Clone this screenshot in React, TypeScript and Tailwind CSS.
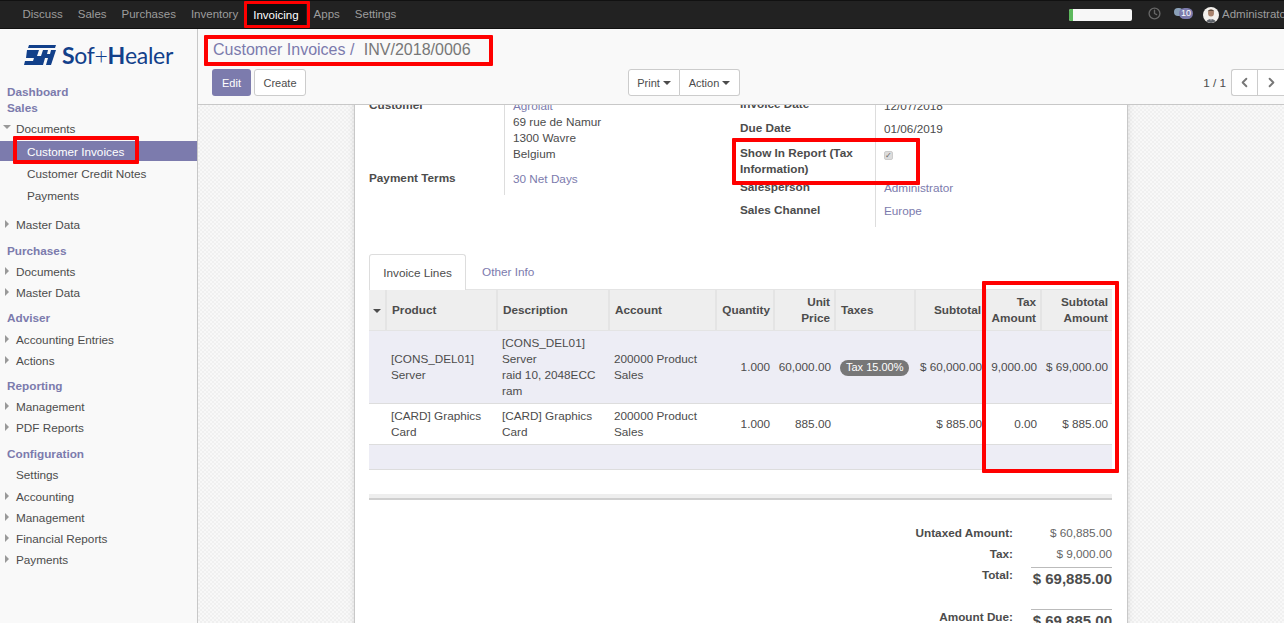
import React from 'react';
import { ChevronLeft, ChevronRight, Clock } from 'lucide-react';

const topMenu = ['Discuss', 'Sales', 'Purchases', 'Inventory', 'Invoicing', 'Apps', 'Settings'];

const Caret = ({ open }: { open?: boolean }) =>
    open ? (
        <span className="absolute left-[3px] top-[7px] w-0 h-0 border-x-[4px] border-x-transparent border-t-[4px] border-t-[#999]"></span>
    ) : (
        <span className="absolute left-[5px] top-[6px] w-0 h-0 border-y-[4px] border-y-transparent border-l-[4px] border-l-[#999]"></span>
    );

const SideItem = ({ label, caret, open }: { label: string; caret?: boolean; open?: boolean }) => (
    <div className="relative h-[21px] pl-[16px] leading-[21px] text-[#4c4c4c]">
        {caret && <Caret open={open} />}
        {label}
    </div>
);

const SideHead = ({ label, className = '' }: { label: string; className?: string }) => (
    <div className={`pl-[7px] font-bold text-[#7c7bad] h-[16px] leading-[18px] ${className}`}>{label}</div>
);

const Th = ({ children, className = '' }: { children?: React.ReactNode; className?: string }) => (
    <th className={`border-l-2 first:border-l-0 border-[#e4e4e4] px-[5px] font-bold leading-[16px] text-[#4c4c4c] ${className}`}>{children}</th>
);

const Logo = () => (
    <div className="flex items-center justify-center h-[52px] mb-[3px] text-[#12408a]">
        <svg width="32" height="20" viewBox="0 0 32 20" className="mr-[6px] shrink-0">
            <path d="M5 0H32L31 3H4Z M3 5H15L13 11H17L19 5H24L23 9H26L27 5H32L27 20H22L24 13H21L19 20H0L1 16H9L10 13H2Z" fill="currentColor" />
        </svg>
        <span className="font-['Lato',sans-serif] text-[23px] tracking-[-0.3px] leading-none whitespace-nowrap">
            <span className="font-bold">S</span>of<span className="font-light">+</span><span className="font-bold">H</span>ealer
        </span>
    </div>
);

export default function App() {
    return (
        <div className="relative w-[1284px] h-[623px] overflow-hidden flex flex-col bg-white font-['Liberation_Sans',Arial,sans-serif] text-[11.75px] text-[#4c4c4c]">
            {/* Top bar */}
            <div className="relative h-[29px] shrink-0 flex items-center bg-[#222] border-y border-[#111] pl-[15px] text-[11.5px]">
                {topMenu.map((m) =>
                    m === 'Invoicing' ? (
                        <span key={m} className="h-[22px] leading-[22px] px-[7.5px] bg-[#0f0f0f] text-white">{m}</span>
                    ) : (
                        <span key={m} className="px-[7.5px] text-[#9d9d9d]">{m}</span>
                    )
                )}
                <div className="ml-auto flex items-center">
                    <div className="w-[63px] h-[12px] rounded-[2px] bg-[#f7f7f7] overflow-hidden mr-[16px]">
                        <div className="w-[4px] h-full bg-[#5cb85c]"></div>
                    </div>
                    <Clock size={13} strokeWidth={2.5} className="text-[#666] mr-[13px] mt-[-2px]" />
                    <div className="relative mr-[10px] w-[19px] h-[11px] mt-[-2px]">
                        <span className="absolute left-0 top-0 w-[9px] h-[8px] rounded-full bg-[#8aa0b8]"></span>
                        <span className="absolute left-[5px] top-0 w-[14px] h-[11px] rounded-full bg-[#7c7bad] text-white text-[9px] leading-[11px] text-center">10</span>
                    </div>
                    <svg width="16" height="16" viewBox="0 0 16 16" className="mr-[3px] shrink-0">
                        <circle cx="8" cy="8" r="8" fill="#f3f0ec" />
                        <ellipse cx="8" cy="6" rx="3" ry="3.6" fill="#a9826c" />
                        <path d="M4.8 5 C5 1.8 11 1.8 11.2 5 L10.4 4 H5.6Z" fill="#5a4538" />
                        <path d="M3.5 14.5 C4 11 12 11 12.5 14.5 L8 16Z" fill="#5b5f66" />
                        <path d="M7 10.5H9L8 14Z" fill="#e8e8e8" />
                    </svg>
                    <span className="text-[#9d9d9d] w-[62px] overflow-hidden whitespace-nowrap">Administrator</span>
                </div>
            </div>

            <div className="flex flex-1 min-h-0">
                {/* Sidebar */}
                <aside className="w-[198px] shrink-0 bg-[#f9f9f9] border-r border-[#c8c8c8]">
                    <Logo />
                    <SideHead label="Dashboard" className="mt-[-1px]" />
                    <SideHead label="Sales" />
                    <div className="mt-[3px]"><SideItem label="Documents" caret open /></div>
                    <div className="h-[20px] leading-[21px] pl-[27px] bg-[#7c7bad] text-white mt-[2px] mb-[2px]">Customer Invoices</div>
                    <div className="h-[22px] leading-[22px] pl-[27px]">Customer Credit Notes</div>
                    <div className="h-[22px] leading-[22px] pl-[27px]">Payments</div>
                    <div className="mt-[7px]"><SideItem label="Master Data" caret /></div>
                    <SideHead label="Purchases" className="mt-[7px]" />
                    <div className="mt-[3px]"><SideItem label="Documents" caret /></div>
                    <SideItem label="Master Data" caret />
                    <SideHead label="Adviser" className="mt-[6px]" />
                    <div className="mt-[4px]"><SideItem label="Accounting Entries" caret /></div>
                    <SideItem label="Actions" caret />
                    <SideHead label="Reporting" className="mt-[6px]" />
                    <div className="mt-[3px]"><SideItem label="Management" caret /></div>
                    <SideItem label="PDF Reports" caret />
                    <SideHead label="Configuration" className="mt-[7px]" />
                    <div className="mt-[3px]"><SideItem label="Settings" /></div>
                    <div className="mt-[1px]"><SideItem label="Accounting" caret /></div>
                    <SideItem label="Management" caret />
                    <SideItem label="Financial Reports" caret />
                    <SideItem label="Payments" caret />
                </aside>

                <main className="flex-1 min-w-0 flex flex-col">
                    {/* Control panel */}
                    <div className="h-[76px] shrink-0 bg-[#f9f9f9] border-b border-[#c8c8c8] px-[14px]">
                        <div className="h-[40px] pt-[10px] pl-[1px] text-[16px] leading-[22px] text-[#7c7bad]">
                            Customer Invoices / <span className="ml-[5px] text-[#777]">INV/2018/0006</span>
                        </div>
                        <div className="relative flex items-center h-[27px]">
                            <button className="h-[27px] w-[39px] pt-[1px] rounded-[3px] bg-[#7c7bad] text-white text-[11px]">Edit</button>
                            <button className="ml-[3px] h-[27px] w-[52px] pt-[1px] rounded-[3px] bg-white border border-[#ccc] text-[11px] text-[#4c4c4c]">Create</button>
                            <div className="absolute left-[416px] top-0 flex">
                                <button className="h-[27px] w-[52px] pt-[1px] rounded-l-[3px] bg-white border border-[#ccc] text-[11px] flex items-center justify-center gap-[3px]">Print<span className="w-0 h-0 border-x-[4px] border-x-transparent border-t-[4px] border-t-[#4c4c4c]"></span></button>
                                <button className="h-[27px] w-[60px] pt-[1px] rounded-r-[3px] bg-white border border-l-0 border-[#ccc] text-[11px] flex items-center justify-center gap-[3px]">Action<span className="w-0 h-0 border-x-[4px] border-x-transparent border-t-[4px] border-t-[#4c4c4c]"></span></button>
                            </div>
                            <div className="ml-auto flex items-center mr-[-14px]">
                                <span className="mr-[5px] text-[#4c4c4c]">1 / 1</span>
                                <div className="flex h-[27px] w-[53px] border border-[#ccc] border-r-0 rounded-l-[3px] bg-white">
                                    <span className="w-[26px] border-r border-[#ccc] flex items-center justify-center text-[#777]"><ChevronLeft size={15} strokeWidth={3} /></span>
                                    <span className="flex-1 flex items-center justify-center text-[#777]"><ChevronRight size={15} strokeWidth={3} /></span>
                                </div>
                            </div>
                        </div>
                    </div>

                    {/* Form view */}
                    <div className="flex-1 min-h-0 overflow-hidden bg-[#f4f4f4] bg-[repeating-conic-gradient(#f0f0f0_0%_25%,#f8f8f8_0%_50%)] bg-[length:4px_4px] pl-[156px]">
                        <div className="w-[774px] h-[800px] bg-white border-x border-[#c8c8c8] shadow-[0_0_6px_rgba(0,0,0,0.12)] px-[14px] mt-[-9px]">
                            {/* Header groups */}
                            <div className="flex h-[131px]">
                                <div className="w-[371px] flex">
                                    <div className="w-[135px] font-bold leading-[16px] pt-[1px]">
                                        <div>Customer</div>
                                        <div className="mt-[57px]">Payment Terms</div>
                                    </div>
                                    <div className="border-l border-[#ddd] pl-[8px] h-[99px] leading-[16px] pt-[2px]">
                                        <div className="text-[#7c7bad]">Agrolait</div>
                                        <div>69 rue de Namur</div>
                                        <div>1300 Wavre</div>
                                        <div>Belgium</div>
                                        <div className="text-[#7c7bad] mt-[9px]">30 Net Days</div>
                                    </div>
                                </div>
                                <div className="flex-1 leading-[16px] flex">
                                    <div className="w-[135px] font-bold">
                                        <div>Invoice Date</div>
                                        <div className="mt-[8px]">Due Date</div>
                                        <div className="mt-[9px]">Show In Report (Tax Information)</div>
                                        <div className="mt-[2px]">Salesperson</div>
                                        <div className="mt-[7px]">Sales Channel</div>
                                    </div>
                                    <div className="border-l border-[#ddd] pl-[8px] h-[131px] pt-[2px]">
                                        <div>12/07/2018</div>
                                        <div className="mt-[7px]">01/06/2019</div>
                                        <div className="mt-[12px] h-[12px] flex items-center">
                                            <span className="w-[9px] h-[9px] rounded-[2px] bg-[#dcdcdc] border border-[#ccc] text-[#666] text-[8px] leading-[8px] text-center">✓</span>
                                        </div>
                                        <div className="mt-[19px] text-[#7c7bad]">Administrator</div>
                                        <div className="mt-[7px] text-[#7c7bad]">Europe</div>
                                    </div>
                                </div>
                            </div>

                            {/* Tabs */}
                            <div className="mt-[27px] flex h-[35px]">
                                <div className="h-[36px] w-[97px] border border-b-0 border-[#ddd] rounded-t-[3px] leading-[35px] text-center bg-white">Invoice Lines</div>
                                <div className="h-[36px] ml-[16px] leading-[35px] text-[#7c7bad]">Other Info</div>
                            </div>

                            {/* Invoice lines */}
                            <table className="w-[743px] table-fixed border-collapse">
                                <colgroup>
                                    <col className="w-[17px]" />
                                    <col className="w-[111px]" />
                                    <col className="w-[112px]" />
                                    <col className="w-[107px]" />
                                    <col className="w-[58px]" />
                                    <col className="w-[61px]" />
                                    <col className="w-[80px]" />
                                    <col className="w-[71px]" />
                                    <col className="w-[55px]" />
                                    <col className="w-[71px]" />
                                </colgroup>
                                <thead>
                                    <tr className="h-[41px] bg-[#eeeeee] border-y border-[#e4e4e4]">
                                        <Th className="!px-0"><span className="inline-block align-middle w-0 h-0 border-x-[4px] border-x-transparent border-t-[4px] border-t-[#4c4c4c]"></span></Th>
                                        <Th className="text-left">Product</Th>
                                        <Th className="text-left">Description</Th>
                                        <Th className="text-left">Account</Th>
                                        <Th className="text-right !px-[3px]">Quantity</Th>
                                        <Th className="text-right !pr-[4px]">Unit Price</Th>
                                        <Th className="text-left">Taxes</Th>
                                        <Th className="text-right !pr-[4px]">Subtotal</Th>
                                        <Th className="text-right !pl-0 !pr-[4px]">Tax Amount</Th>
                                        <Th className="text-right !pl-0 !pr-[4px]">Subtotal Amount</Th>
                                    </tr>
                                </thead>
                                <tbody className="leading-[16px]">
                                    <tr className="h-[73px] bg-[#ededf5] border-b border-[#ddd]">
                                        <td></td>
                                        <td className="px-[5px]">[CONS_DEL01] Server</td>
                                        <td className="px-[5px]">[CONS_DEL01] Server<br />raid 10, 2048ECC ram</td>
                                        <td className="px-[5px]">200000 Product Sales</td>
                                        <td className="px-[4px] text-right">1.000</td>
                                        <td className="px-[4px] text-right">60,000.00</td>
                                        <td className="px-[5px]"><span className="inline-block h-[16px] leading-[15px] px-[6px] rounded-full bg-[#777] text-white text-[11px] whitespace-nowrap">Tax 15.00%</span></td>
                                        <td className="pr-[4px] text-right whitespace-nowrap">$ 60,000.00</td>
                                        <td className="pr-[4px] text-right whitespace-nowrap">9,000.00</td>
                                        <td className="pr-[4px] text-right whitespace-nowrap">$ 69,000.00</td>
                                    </tr>
                                    <tr className="h-[41px] border-b border-[#ddd]">
                                        <td></td>
                                        <td className="px-[5px]">[CARD] Graphics Card</td>
                                        <td className="px-[5px]">[CARD] Graphics Card</td>
                                        <td className="px-[5px]">200000 Product Sales</td>
                                        <td className="px-[4px] text-right">1.000</td>
                                        <td className="px-[4px] text-right">885.00</td>
                                        <td></td>
                                        <td className="pr-[4px] text-right">$ 885.00</td>
                                        <td className="pr-[4px] text-right">0.00</td>
                                        <td className="pr-[4px] text-right">$ 885.00</td>
                                    </tr>
                                    <tr className="h-[25px] bg-[#ededf5] border-b border-[#ddd]"><td colSpan={10}></td></tr>
                                </tbody>
                            </table>

                            <div className="mt-[24px] w-[743px] h-[6px] bg-[#eeeeee] border-b-2 border-[#cfcfcf]"></div>

                            {/* Totals */}
                            <div className="mt-[25px] ml-[520px] w-[223px] grid grid-cols-[124px_1fr] leading-[16px]">
                                <div className="text-right font-bold h-[21px]">Untaxed Amount:</div>
                                <div className="text-right text-[#666]">$ 60,885.00</div>
                                <div className="text-right font-bold h-[21px]">Tax:</div>
                                <div className="text-right text-[#666]">$ 9,000.00</div>
                                <div className="text-right font-bold h-[42px]">Total:</div>
                                <div className="ml-[18px] border-t border-[#bbb] pt-[1px] text-right font-bold text-[15px] leading-[20px] whitespace-nowrap">$ 69,885.00</div>
                                <div className="text-right font-bold">Amount Due:</div>
                                <div className="ml-[18px] border-t border-[#bbb] pt-[1px] text-right font-bold text-[15px] leading-[20px] whitespace-nowrap">$ 69,885.00</div>
                            </div>
                        </div>
                    </div>
                </main>
            </div>

            {/* Red annotation boxes */}
            <div className="absolute left-[244px] top-[1px] w-[66px] h-[27px] border-[3px] border-[#f00] rounded-[1px]"></div>
            <div className="absolute left-[204px] top-[35px] w-[289px] h-[31px] border-[4px] border-[#f00] rounded-[1px]"></div>
            <div className="absolute left-[13px] top-[136px] w-[126px] h-[28px] border-[4px] border-[#f00] rounded-[1px]"></div>
            <div className="absolute left-[732px] top-[138px] w-[188px] h-[47px] border-[4px] border-[#f00] rounded-[1px]"></div>
            <div className="absolute left-[982px] top-[281px] w-[137px] h-[192px] border-[4px] border-[#f00] rounded-[1px]"></div>
        </div>
    );
}
